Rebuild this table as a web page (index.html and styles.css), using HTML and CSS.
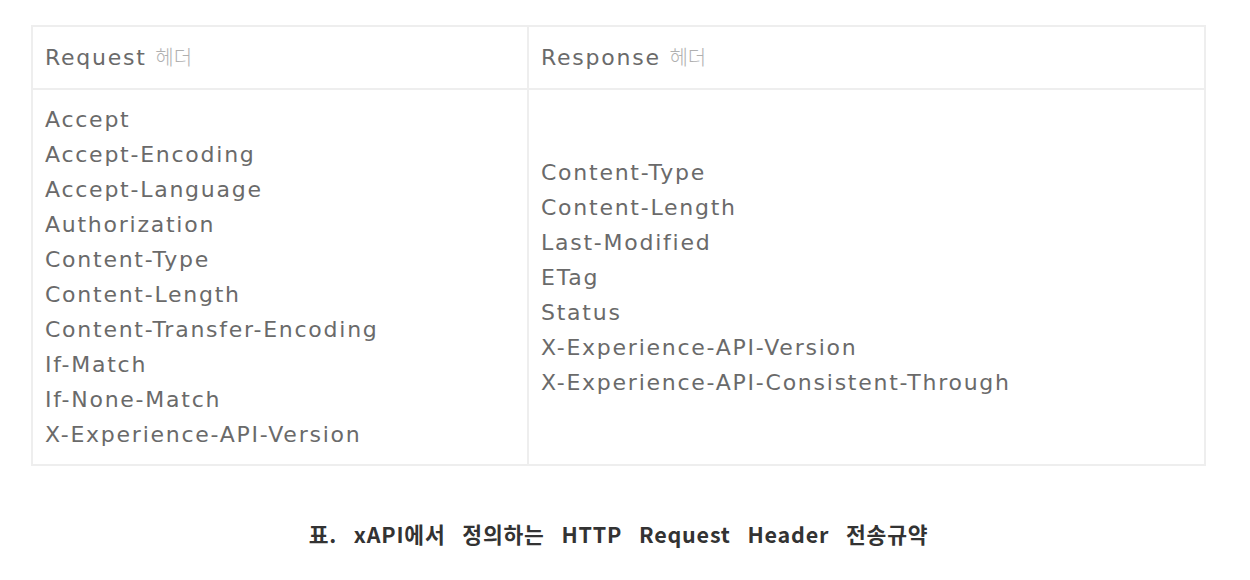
FILE: index.html
```html
<!DOCTYPE html>
<html lang="ko">
<head>
<meta charset="utf-8">
<link rel="stylesheet" href="styles.css">
</head>
<body>
<div class="page">
  <table class="headers">
    <thead>
      <tr>
        <th class="col-req">Request <span class="ko">헤더</span></th>
        <th class="col-res">Response <span class="ko">헤더</span></th>
      </tr>
    </thead>
    <tbody>
      <tr>
        <td class="col-req">
          <div>Accept</div>
          <div>Accept-Encoding</div>
          <div>Accept-Language</div>
          <div>Authorization</div>
          <div>Content-Type</div>
          <div>Content-Length</div>
          <div>Content-Transfer-Encoding</div>
          <div>If-Match</div>
          <div>If-None-Match</div>
          <div>X-Experience-API-Version</div>
        </td>
        <td class="col-res">
          <div>Content-Type</div>
          <div>Content-Length</div>
          <div>Last-Modified</div>
          <div>ETag</div>
          <div>Status</div>
          <div>X-Experience-API-Version</div>
          <div>X-Experience-API-Consistent-Through</div>
        </td>
      </tr>
    </tbody>
  </table>
  <p class="caption">표. xAPI에서 정의하는 HTTP Request Header 전송규약</p>
</div>
</body>
</html>
```

FILE: styles.css
```css
html, body {
  margin: 0;
  padding: 0;
  background: #ffffff;
}

.page {
  padding: 25px 0 0 31px;
  width: 1175px;
}

.headers {
  width: 1175px;
  border-collapse: collapse;
  font-family: "DejaVu Sans", "Noto Sans CJK KR", sans-serif;
  font-size: 22px;
  letter-spacing: 1.75px;
  color: #6a6a6a;
}

.headers th,
.headers td {
  border: 2px solid #eeeeee;
  text-align: left;
  font-weight: 400;
  padding: 0 12px;
  vertical-align: middle;
}

.headers th {
  height: 60px;
  line-height: 60px;
}

.headers .col-req {
  width: 470px;
}

.headers td {
  line-height: 35px;
  padding-top: 12px;
  padding-bottom: 12px;
}

.ko {
  font-family: "Noto Sans CJK KR", sans-serif;
  color: #b0b0b0;
  font-size: 20px;
  font-weight: 300;
  letter-spacing: 0;
}

.caption {
  margin: 52px 0 0 0;
  text-align: center;
  font-family: "Noto Sans CJK KR", "Noto Sans", sans-serif;
  font-weight: 700;
  font-size: 21.5px;
  color: #333333;
  letter-spacing: 0.8px;
  word-spacing: 10px;
}
```
